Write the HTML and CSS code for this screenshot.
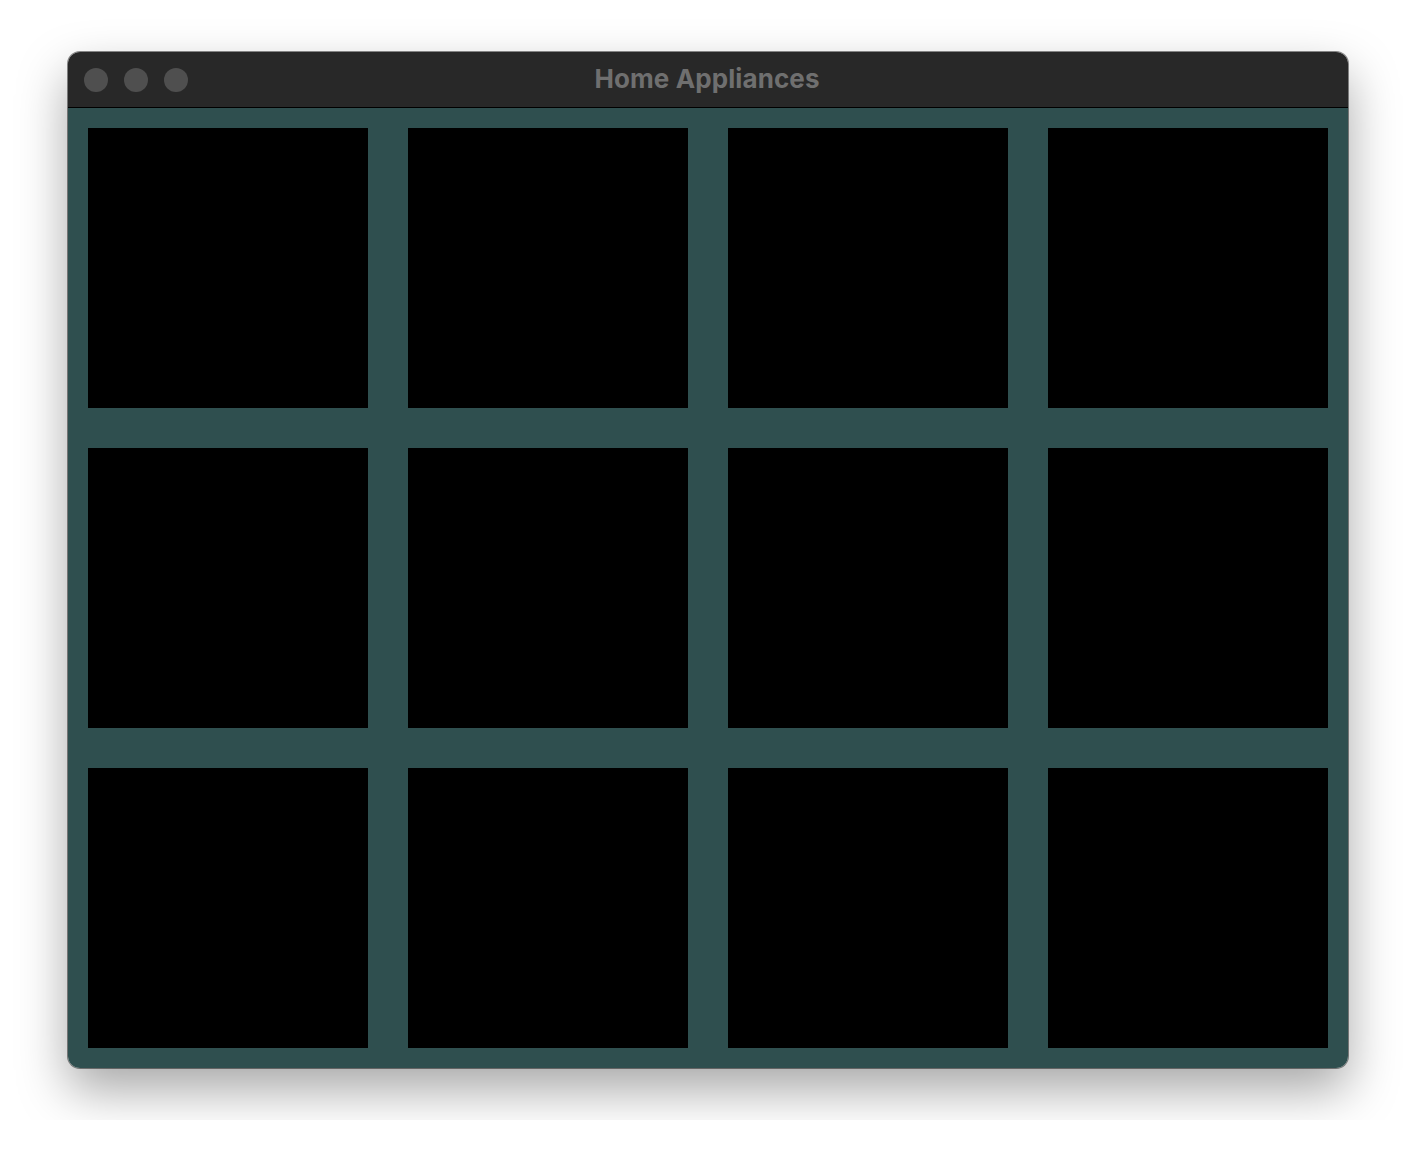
FILE: index.html
```html
<!DOCTYPE html>
<html>
<head>
<meta charset="utf-8">
<title>Home Appliances</title>
<link rel="stylesheet" href="styles.css">
</head>
<body>
<div class="window">
  <div class="titlebar">
    <div class="lights">
      <span class="light"></span>
      <span class="light"></span>
      <span class="light"></span>
    </div>
    <div class="title">Home Appliances</div>
  </div>
  <div class="content">
    <div class="cell"></div>
    <div class="cell"></div>
    <div class="cell"></div>
    <div class="cell"></div>
    <div class="cell"></div>
    <div class="cell"></div>
    <div class="cell"></div>
    <div class="cell"></div>
    <div class="cell"></div>
    <div class="cell"></div>
    <div class="cell"></div>
    <div class="cell"></div>
  </div>
</div>
</body>
</html>
```
FILE: styles.css
```css
html, body {
  margin: 0;
  background: #ffffff;
}
body {
  padding: 52px 68px;
  font-family: Inter, "Liberation Sans", sans-serif;
}
.window {
  width: 1280px;
  border-radius: 12px;
  overflow: hidden;
  box-shadow: 0 0 0 1px rgba(0,0,0,0.45), 0 22px 50px rgba(0,0,0,0.35);
}
.titlebar {
  height: 55px;
  background: #282828;
  border-bottom: 1px solid #000000;
  display: flex;
  align-items: center;
  position: relative;
}
.lights {
  display: flex;
  gap: 16px;
  padding-left: 16px;
}
.light {
  width: 24px;
  height: 24px;
  border-radius: 50%;
  background: #4f4f4f;
}
.title {
  position: absolute;
  left: 0;
  right: 0;
  top: 11px;
  text-align: center;
  color: #6f6f6f;
  font-weight: 700;
  font-size: 26px;
  line-height: 32px;
  letter-spacing: 0.1px;
  padding-right: 2px;
}
.content {
  background: #2f4f4f;
  padding: 20px;
  display: grid;
  grid-template-columns: repeat(4, 280px);
  grid-auto-rows: 280px;
  gap: 40px;
}
.cell {
  background: #000000;
}
```
